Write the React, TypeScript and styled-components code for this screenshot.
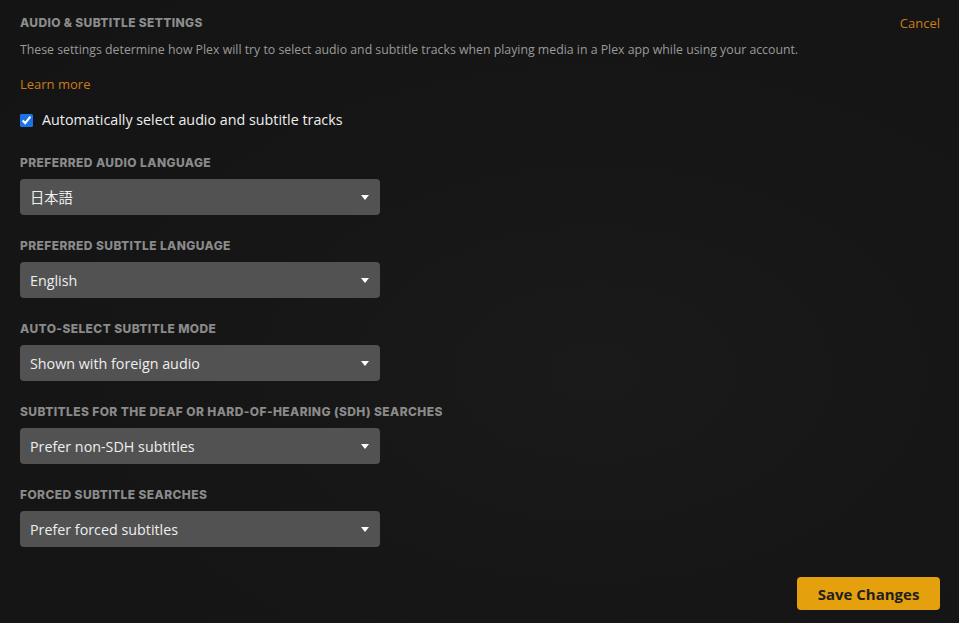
import React from "react";
import styled, { createGlobalStyle } from "styled-components";

const Global = createGlobalStyle`
  html, body { margin: 0; padding: 0; background: #151515; }
  body { font-family: "Open Sans", "Noto Sans", sans-serif; }
  * { box-sizing: border-box; }
`;

const Page = styled.div`
  width: 959px;
  height: 623px;
  background: radial-gradient(ellipse at 62% 60%, #1a1a1a 0%, #161616 45%, #141414 100%);
  padding: 14px 19px 0 20px;
  display: flex;
  flex-direction: column;
`;

const Header = styled.div`
  display: flex;
  justify-content: space-between;
  align-items: flex-start;
`;

const Title = styled.h1`
  margin: 1px 0 0;
  font-family: "Inter", "Open Sans", sans-serif;
  font-weight: 800;
  font-size: 12px;
  line-height: 16px;
  letter-spacing: 0.35px;
  color: #8c8c8c;
  text-transform: uppercase;
`;

const Cancel = styled.a`
  font-size: 13px;
  line-height: 18px;
  color: #cc7b19;
  cursor: pointer;
`;

const Description = styled.p`
  margin: 9px 0 0;
  font-size: 12.3px;
  line-height: 18px;
  color: #9a9a9a;
`;

const LearnMore = styled.a`
  display: block;
  margin-top: 16px;
  font-size: 13px;
  line-height: 18px;
  color: #cc7b19;
`;

const CheckRow = styled.label`
  display: flex;
  align-items: center;
  gap: 9px;
  margin-top: 17px;
  font-size: 14.3px;
  line-height: 20px;
  color: #eeeeee;
`;

const Checkbox = styled.input`
  width: 13px;
  height: 13px;
  margin: 0;
  accent-color: #1a73e8;
`;

const Field = styled.div<{ $first?: boolean }>`
  margin-top: ${(p) => (p.$first ? "25px" : "23px")};
  display: flex;
  flex-direction: column;
  gap: 8px;
`;

const Label = styled.div`
  font-family: "Inter", "Open Sans", sans-serif;
  font-weight: 800;
  font-size: 12px;
  line-height: 16px;
  letter-spacing: 0.4px;
  color: #8a8a8a;
  text-transform: uppercase;
`;

const SelectWrap = styled.div`
  position: relative;
  width: 360px;
  height: 36px;
`;

const Select = styled.select`
  appearance: none;
  width: 100%;
  height: 100%;
  border: none;
  border-radius: 4px;
  background: #525252;
  color: #eeeeee;
  font-family: "Open Sans", "Noto Sans CJK JP", sans-serif;
  font-size: 14.3px;
  padding: 0 30px 0 10px;
  outline: none;
`;

const Caret = styled.svg`
  position: absolute;
  right: 11px;
  top: 16px;
  pointer-events: none;
`;

const Footer = styled.div`
  display: flex;
  justify-content: flex-end;
  margin-top: 30px;
`;

const SaveButton = styled.button`
  width: 143px;
  height: 33px;
  border: none;
  border-radius: 4px;
  background: #e5a00d;
  color: #1f1f1f;
  font-family: "Open Sans", sans-serif;
  font-weight: 700;
  font-size: 15px;
  cursor: pointer;
`;

const fields = [
  { label: "Preferred Audio Language", value: "日本語" },
  { label: "Preferred Subtitle Language", value: "English" },
  { label: "Auto-Select Subtitle Mode", value: "Shown with foreign audio" },
  { label: "Subtitles for the Deaf or Hard-of-Hearing (SDH) Searches", value: "Prefer non-SDH subtitles" },
  { label: "Forced Subtitle Searches", value: "Prefer forced subtitles" },
];

export default function App() {
  return (
    <>
      <Global />
      <Page>
        <Header>
          <Title>Audio &amp; Subtitle Settings</Title>
          <Cancel>Cancel</Cancel>
        </Header>
        <Description>
          These settings determine how Plex will try to select audio and subtitle tracks when playing media in a Plex app while using your account.
        </Description>
        <LearnMore>Learn more</LearnMore>
        <CheckRow>
          <Checkbox type="checkbox" defaultChecked />
          Automatically select audio and subtitle tracks
        </CheckRow>
        {fields.map((f, i) => (
          <Field key={f.label} $first={i === 0}>
            <Label>{f.label}</Label>
            <SelectWrap>
              <Select defaultValue={f.value}>
                <option value={f.value}>{f.value}</option>
              </Select>
              <Caret width="8" height="5" viewBox="0 0 8 5">
                <path d="M0 0 H8 L4 5 Z" fill="#ffffff" />
              </Caret>
            </SelectWrap>
          </Field>
        ))}
        <Footer>
          <SaveButton>Save Changes</SaveButton>
        </Footer>
      </Page>
    </>
  );
}
